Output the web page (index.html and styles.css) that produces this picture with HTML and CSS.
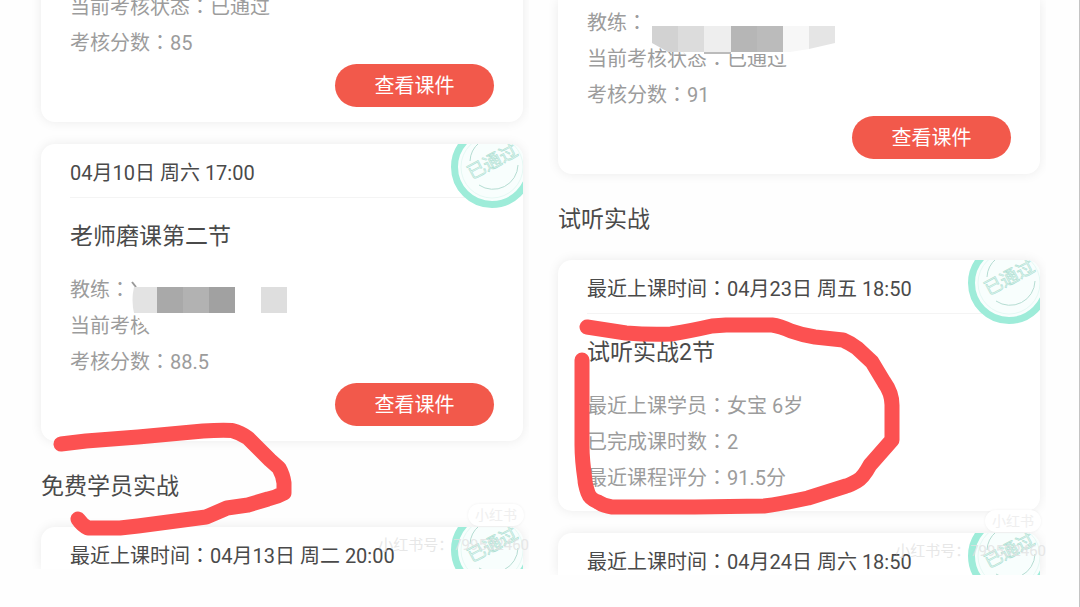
FILE: index.html
```
<!DOCTYPE html>
<html lang="zh-CN">

<head>
  <meta charset="UTF-8">
  <meta name="viewport" content="width=device-width, initial-scale=1.0">
  <title>课程考核</title>
  <link rel="stylesheet" href="styles.css">
</head>

<body>
  <svg class="defs" aria-hidden="true">
    <symbol id="stamp" viewBox="0 0 72 66">
      <circle cx="41" cy="23" r="37.500" fill="#f8fefd" stroke="#9eecd9" stroke-width="7" />
      <circle cx="41" cy="23" r="31" fill="none" stroke="#e6f8f4" stroke-width="1" />
      <path d="M19 17a25 25 0 0 1 9-18M28 41a25 25 0 0 0 39-20" fill="none" stroke="#b5dcd2" stroke-width="1" />
      <text class="stamp-text" x="41" y="24" transform="rotate(-28 41 17)" text-anchor="middle">已通过</text>
    </symbol>
  </svg>

  <div class="container">
    <div class="shot">
      <div class="card card-cut scrolled">
        <div class="row">当前考核状态<span class="colon" lang="zh-TW">：</span>已通过</div>
        <div class="row">考核分数<span class="colon" lang="zh-TW">：</span>85</div>
        <button class="button" type="button">查看课件</button>
      </div>

      <div class="card">
        <div class="time">04月10日 周六 17:00</div>
        <svg class="stamp" role="img" aria-label="已通过"><use href="#stamp" /></svg>
        <h3 class="title">老师磨课第二节</h3>
        <div class="row">教练<span class="colon" lang="zh-TW">：</span></div>
        <div class="row">当前考核</div>
        <div class="row">考核分数<span class="colon" lang="zh-TW">：</span>88.5</div>
        <button class="button" type="button">查看课件</button>
      </div>

      <h2 class="section">免费学员实战</h2>

      <div class="card card-peek">
        <div class="time">最近上课时间<span class="colon" lang="zh-TW">：</span>04月13日 周二 20:00</div>
        <svg class="stamp" role="img" aria-label="已通过"><use href="#stamp" /></svg>
      </div>

      <svg class="marks" width="499" height="568" viewBox="30 0 499 568" aria-hidden="true">
        <!-- mosaic -->
        <path d="M132 282l4 5" stroke="#999" stroke-width="2" />
        <path d="M136 312L141 322L151 334V312Z" fill="#fff" />
        <path d="M134 287H157V313H134Q131 300 134 287" fill="#e3e3e3" />
        <rect x="157" y="287" width="26" height="26" fill="#a9a9a9" />
        <rect x="183" y="287" width="26" height="26" fill="#b2b2b2" />
        <rect x="209" y="287" width="26" height="26" fill="#a1a1a1" />
        <rect x="261" y="287" width="26" height="26" fill="#dedede" />
        <!-- brush -->
        <path class="brush" d="M61 444L86 441L138 437L203 431Q220 430 232 430.500Q241 433 248 438L270 460L279 468Q283 475 284 483V493Q277 497 268 499L248 505L227 508L206 517L138 526L120 528H88Q82 525 78 519" />
      </svg>
      <div class="logo">小红书</div>
      <div class="account">小红书号：799532460</div>
    </div>

    <div class="shot">
      <div class="card card-cut">
        <div class="row">教练<span class="colon" lang="zh-TW">：</span></div>
        <div class="row">当前考核状态<span class="colon" lang="zh-TW">：</span>已通过</div>
        <div class="row">考核分数<span class="colon" lang="zh-TW">：</span>91</div>
        <button class="button" type="button">查看课件</button>
      </div>

      <h2 class="section">试听实战</h2>

      <div class="card">
        <div class="time">最近上课时间<span class="colon" lang="zh-TW">：</span>04月23日 周五 18:50</div>
        <svg class="stamp" role="img" aria-label="已通过"><use href="#stamp" /></svg>
        <h3 class="title">试听实战2节</h3>
        <div class="row">最近上课学员<span class="colon" lang="zh-TW">：</span>女宝 6岁</div>
        <div class="row">已完成课时数<span class="colon" lang="zh-TW">：</span>2</div>
        <div class="row">最近课程评分<span class="colon" lang="zh-TW">：</span>91.5分</div>
      </div>

      <div class="card card-peek">
        <div class="time">最近上课时间<span class="colon" lang="zh-TW">：</span>04月24日 周六 18:50</div>
        <svg class="stamp" role="img" aria-label="已通过"><use href="#stamp" /></svg>
      </div>

      <svg class="marks" width="499" height="577" viewBox="547 0 499 577" aria-hidden="true">
        <!-- mosaic -->
        <path d="M668 50H792V54H690Z" fill="#fff" />
        <path d="M652 26H678V52H668L652 43Z" fill="#d2d2d2" />
        <rect x="678" y="26" width="26" height="26" fill="#dcdcdc" />
        <rect x="704" y="26" width="27" height="26" fill="#eee" />
        <rect x="704" y="52" width="27" height="2" fill="#bbb" />
        <rect x="731" y="26" width="26" height="26" fill="#b6b6b6" />
        <rect x="757" y="26" width="26" height="26" fill="#bbb" />
        <path d="M783 26H809V49L790 52H783Z" fill="#f7f7f7" />
        <path d="M809 26H835V43L809 49Z" fill="#e5e5e5" />
        <!-- brush -->
        <path class="brush" d="M587 327L626 333Q650 335 671 334Q690 331 712 326L726 325H772Q780 326 791 331Q802 335 815 337L843 340Q850 343 857 348L872 362L884 382Q892 393 892 405V440L870 465Q863 478 857 481Q850 485 846 486L808 498Q780 504 764 506L695 507H612Q604 506 598 502Q590 499 588 493Q585 484 585 480Q582 460 582 445V360" />
      </svg>
      <div class="logo">小红书</div>
      <div class="account">小红书号：799532460</div>
    </div>
  </div>
</body>

</html>
```
FILE: styles.css
```
* {
  box-sizing: border-box;
  margin: 0;
  padding: 0;
}

body {
  background: #fefefe;
  font-family: Roboto, "Noto Sans CJK SC", sans-serif;
  font-size: 20px;
  color: #4a4a4a;
}

.defs {
  position: absolute;
  width: 0;
  height: 0;
}

.container {
  display: flex;
  align-items: flex-start;
  gap: 18px;
  min-height: 100vh;
  padding: 0 33px 0 30px;
  border-right: 1px solid #c4c4c4;
}

.shot {
  position: relative;
  flex: 1;
  padding: 0 6px 0 11px;
  overflow: hidden;
}

.card {
  position: relative;
  display: flex;
  flex-direction: column;
  margin-bottom: 22px;
  padding: 0 29px 15px;
  border-radius: 14px;
  background: #fff;
  box-shadow: 0 0 12px rgba(0, 0, 0, 0.08);
}

.card-cut {
  padding-top: 5px;
  border-radius: 0 0 14px 14px;
}

.scrolled {
  margin-top: -16px;
}

.card-peek {
  height: 42px;
  margin-bottom: 0;
  padding-bottom: 0;
  border-radius: 14px 14px 0 0;
  overflow: hidden;
}

.time {
  flex: none;
  height: 54px;
  padding-top: 2px;
  line-height: 54px;
  border-bottom: 1px solid #f4f4f4;
}

.title,
.section {
  font-size: 23px;
  font-weight: normal;
  line-height: 36px;
}

.title {
  padding: 21px 0 17px;
}

.section {
  margin-top: -22px;
  padding: 28px 0 22px;
}

.row {
  line-height: 36px;
  color: #9c9c9c;
}

/* full-width colon centred in its box */
.colon {
  font-family: "Noto Sans CJK TC", sans-serif;
  line-height: 1;
}

.button {
  align-self: flex-end;
  width: 159px;
  height: 43px;
  margin-top: 3px;
  padding-bottom: 2px;
  border: none;
  border-radius: 22px;
  background: #f2594b;
  color: #fff;
  font-family: inherit;
  font-size: 20px;
  cursor: pointer;
}

.stamp {
  position: absolute;
  top: 0;
  right: 0;
  width: 72px;
  height: 66px;
  border-top-right-radius: 14px;
}

.stamp-text {
  font-size: 18px;
  fill: #e2f8f2;
  stroke: #b0dfd3;
  stroke-width: 0.6px;
}

.marks {
  position: absolute;
  top: 0;
  left: 0;
}

.brush {
  fill: none;
  stroke: #fc5151;
  stroke-width: 15px;
  stroke-linecap: round;
  stroke-linejoin: round;
}

.logo {
  position: absolute;
  right: 5px;
  bottom: 43px;
  width: 56px;
  border-radius: 11px;
  background: #fff;
  box-shadow: 0 0 3px rgba(0, 0, 0, 0.06);
  color: #efefef;
  font-size: 14px;
  line-height: 22px;
  text-align: center;
}

.account {
  position: absolute;
  right: 0;
  bottom: 14px;
  color: rgba(225, 225, 225, 0.8);
  font-size: 15px;
  line-height: 20px;
}
```
